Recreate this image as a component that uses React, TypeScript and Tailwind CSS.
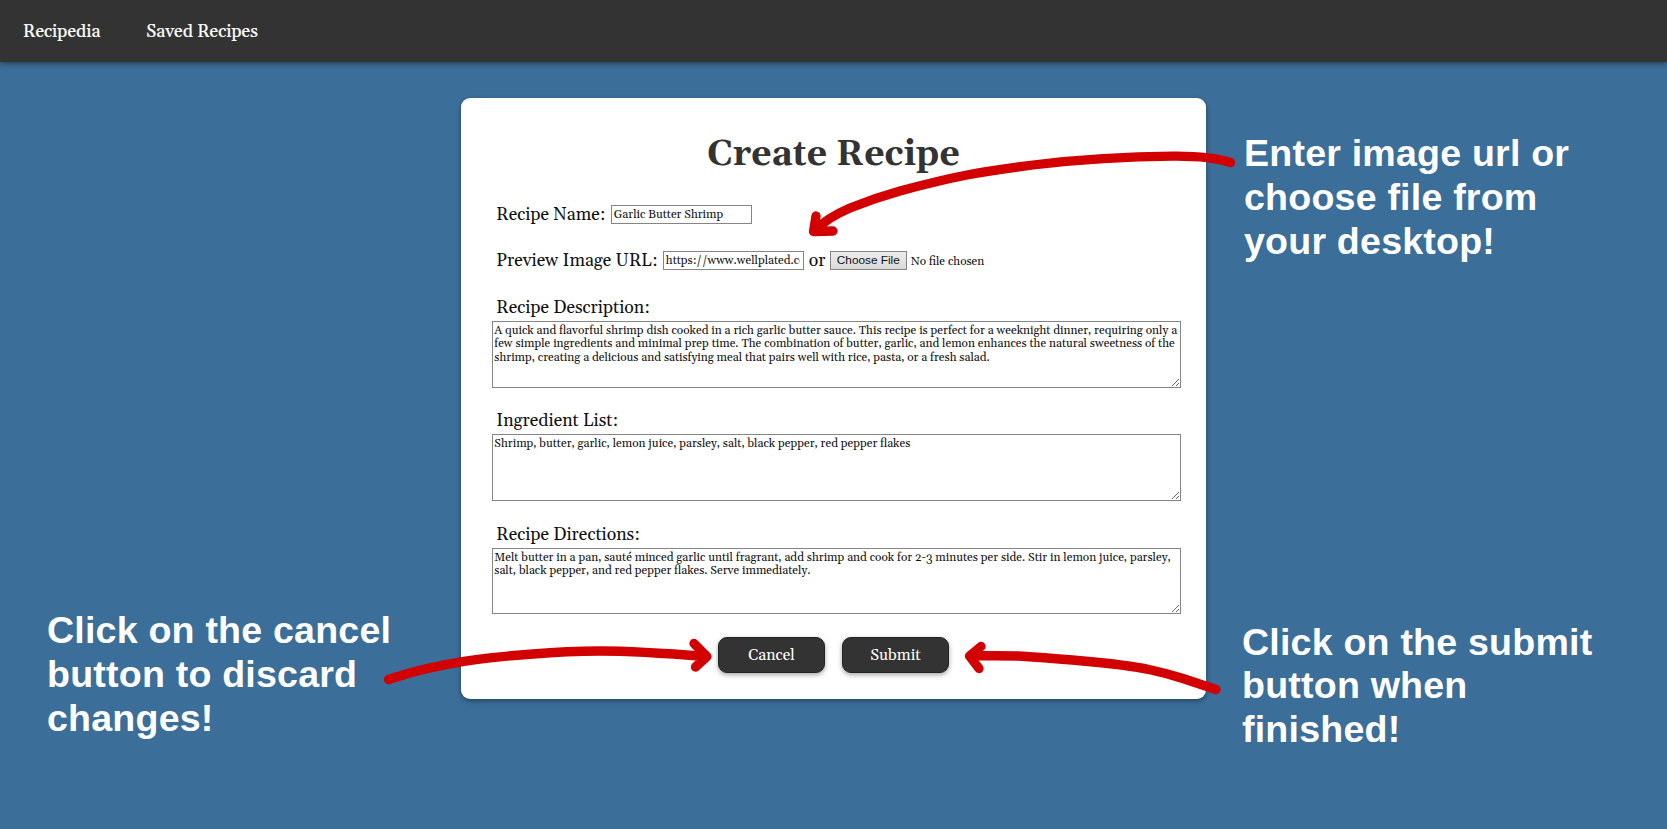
type AreaProps = { label: string; text: string };

function Area({ label, text }: AreaProps) {
  return (
    <div className="mb-[22.7px]">
      <label className="relative top-px block pl-[4px] leading-5">{label}</label>
      <textarea
        spellCheck={false}
        defaultValue={text}
        className="mt-1 block h-[66.7px] w-[688.7px] resize overflow-auto border border-[#858585] bg-white px-[1px] pt-[2px] text-[11.83px] leading-[13.4px] outline-none oldstyle-nums"
      />
    </div>
  );
}

const field =
  'h-[19px] w-[141px] border border-[#858585] bg-white pl-[2px] pr-[2.5px] text-[11.82px] outline-none';
const action =
  'h-9 w-[107px] rounded-[9px] border border-[#222] bg-[#333] pt-[2px] text-[15.75px] text-white shadow-[0_2px_5px_rgba(0,0,0,0.35)]';
const note =
  'absolute whitespace-pre font-["Liberation_Sans",Arial,sans-serif] text-[37.6px] font-bold leading-[43.9px] tracking-[0.2px] text-white';

export default function App() {
  return (
    <div className='relative h-[829px] w-full overflow-hidden bg-[#3b6e99] font-[Gelasio,Georgia,"Liberation_Serif",serif] text-[17.65px] text-[#111]'>
      <header className="relative flex h-[62px] items-center gap-[46px] bg-[#333] pt-[3px] pl-[23px] text-[17.75px] text-white shadow-[0_2px_5px_rgba(0,0,0,0.4)] [-webkit-text-stroke:0.2px_white]">
        <a>Recipedia</a>
        <a>Saved Recipes</a>
      </header>

      <main className="mx-auto mt-9 h-[601px] w-[745.4px] rounded-[9px] bg-white pt-[37px] pl-[31.5px] shadow-[0_2px_5px_rgba(0,0,0,0.4)]">
        <h1 className="mr-[31.5px] text-center text-[35.5px] font-bold leading-10 text-[#333]">Create Recipe</h1>

        <div className="mt-[30px] flex h-5 items-start pl-[4px] leading-[21px]">
          <label className="w-[114.5px]">Recipe Name:</label>
          <input className={field} defaultValue="Garlic Butter Shrimp" />
        </div>

        <div className="mt-[26px] mb-[26px] flex h-5 items-start pl-[4px] leading-[21px]">
          <label className="w-[166.5px]">Preview Image URL:</label>
          <input className={field} defaultValue="https://www.wellplated.com" />
          <span className="w-[26px] pl-[5px]">or</span>
          <button className='h-[19px] w-[77px] border border-[#858585] bg-gradient-to-b from-[#ececec] to-[#dadada] pt-px font-["Liberation_Sans",Arial,sans-serif] text-[11.8px] leading-none'>
            Choose File
          </button>
          <span className="pl-1 text-[11.82px]">No file chosen</span>
        </div>

        <Area
          label="Recipe Description:"
          text="A quick and flavorful shrimp dish cooked in a rich garlic butter sauce. This recipe is perfect for a weeknight dinner, requiring only a few simple ingredients and minimal prep time. The combination of butter, garlic, and lemon enhances the natural sweetness of the shrimp, creating a delicious and satisfying meal that pairs well with rice, pasta, or a fresh salad."
        />
        <Area
          label="Ingredient List:"
          text="Shrimp, butter, garlic, lemon juice, parsley, salt, black pepper, red pepper flakes"
        />
        <Area
          label="Recipe Directions:"
          text="Melt butter in a pan, sauté minced garlic until fragrant, add shrimp and cook for 2-3 minutes per side. Stir in lemon juice, parsley, salt, black pepper, and red pepper flakes. Serve immediately."
        />

        <div className="mr-[31.5px] flex justify-center gap-[17px]">
          <button className={action}>Cancel</button>
          <button className={action}>Submit</button>
        </div>
      </main>

      <p className={`${note} left-[1244px] top-[132px]`}>{'Enter image url or\nchoose file from\nyour desktop!'}</p>
      <p className={`${note} left-[47px] top-[609px]`}>{'Click on the cancel\nbutton to discard\nchanges!'}</p>
      <p className={`${note} left-[1242px] top-[620.5px]`}>{'Click on the submit\nbutton when\nfinished!'}</p>

      <svg
        className="pointer-events-none absolute left-0 top-0"
        width="1667"
        height="829"
        viewBox="0 0 1667 829"
        fill="none"
        stroke="#d20000"
        strokeWidth="9.300"
        strokeLinecap="round"
        strokeLinejoin="round"
      >
        <path d="M1230.500 162.500C1215 157.500 1195 156 1173 156.200C1120 156.500 1075 160 1033 165C1010 168 988 171 967 175C944 179.500 922 185 900 191C882 196 866 201.500 850 208C836 214 824 221 814 231M816 216L813.500 231.500L833 231" />
        <path d="M388.500 679.500C440 662 490 657 533 654C556 652 578 651 600 651C628 651 656 652.500 706 656.500M694 643.500L707 656.500L695.500 667" />
        <path d="M1216 689.500L1183 678.500C1172 675 1161 672 1150 669.700C1128 665 1106 663 1083 661C1061 659 1039 657 1017 656L970 655.500M981 646.500L969.500 656L979 668.500" />
      </svg>
    </div>
  );
}
